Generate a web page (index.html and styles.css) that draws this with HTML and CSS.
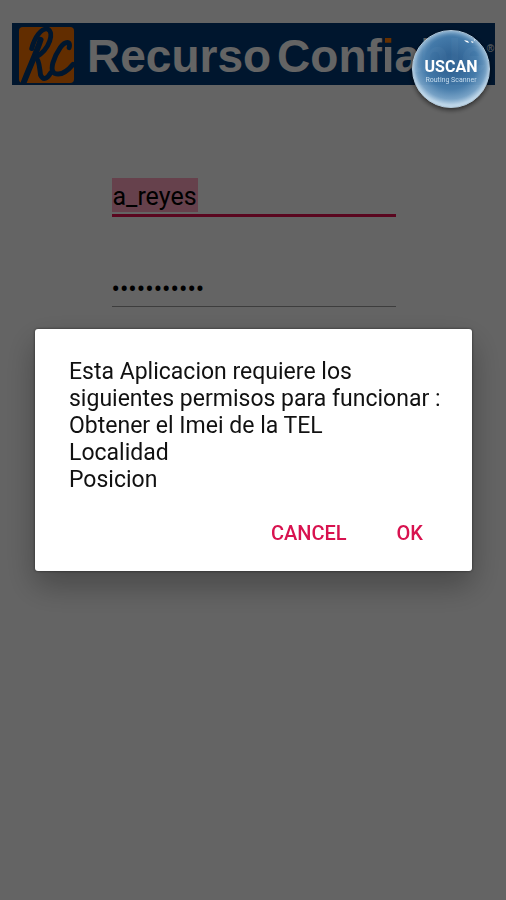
FILE: index.html
```html
<!DOCTYPE html>
<html lang="es">
<head>
<meta charset="utf-8">
<meta name="viewport" content="width=device-width, initial-scale=1">
<title>Recurso Confiable</title>
<link rel="stylesheet" href="styles.css">
</head>
<body>
<main class="screen">
  <header class="banner">
    <svg class="logo" viewBox="0 0 60 60" role="img" aria-label="RC">
      <rect x="2" y="2" width="56" height="57" rx="4" fill="#f57200"/>
      <g fill="none" stroke="#003773" stroke-linecap="round" stroke-linejoin="round">
        <path stroke-width="6" d="M24 15C20 28 13 42 7 58"/>
        <path stroke-width="5" d="M15 24C18 12 25 3 31 4C38 7 34 24 19 33C23 35 23 46 24 51C27 57 31 54 34 49"/>
        <path stroke-width="5" d="M53 23C55 16 49 16 44 23C37 33 33 46 38 49C45 52 52 46 57 40"/>
      </g>
    </svg>
    <h1 class="brand"><span>Recurso</span> <span>Conf<span class="accent-i">i</span>able</span></h1>
    <span class="registered">®</span>
  </header>
  <form class="login">
    <label class="field field-active"><input class="user" type="text" value="a_reyes" aria-label="Usuario"></label>
    <label class="field"><input class="password" type="password" value="abcdefghijk" aria-label="Clave"></label>
  </form>
</main>
<div class="scrim">
  <section class="dialog" role="alertdialog" aria-describedby="message">
    <p class="message" id="message">Esta Aplicacion requiere los siguientes permisos para funcionar :<br>Obtener el Imei de la TEL<br>Localidad<br>Posicion</p>
    <div class="actions">
      <button type="button">CANCEL</button>
      <button type="button">OK</button>
    </div>
  </section>
</div>
<aside class="badge">
  <svg class="glint" viewBox="0 0 12 6" aria-hidden="true"><path d="M0 1l4 1 1 2-3-1zM7 2l3 1-2 1zM10 0l1 1-1 1z" fill="#fff"/></svg>
  <strong>USCAN</strong>
  <small>Routing Scanner</small>
</aside>
</body>
</html>
```
FILE: styles.css
```css
* {
  box-sizing: border-box;
}

body {
  margin: 0;
  min-height: 100vh;
  background: #fafafa;
  color: #000;
  font-family: Roboto, "Liberation Sans", sans-serif;
}

.screen {
  padding: 23px 11px 0 12px;
}

.banner {
  display: flex;
  align-items: center;
  height: 62px;
  padding: 0 3px 0 5px;
  background: #003773;
  color: #fafafa;
  font-family: "Liberation Sans", Arial, sans-serif;
  overflow: hidden;
}

.logo {
  flex: none;
  width: 59px;
  height: 59px;
}

.brand {
  display: flex;
  gap: 6px;
  margin: 3px 0 0 11px;
  font-size: 46px;
  line-height: 60px;
  white-space: nowrap;
}

.accent-i {
  background: linear-gradient(#ff7800 16px, #fafafa 16px);
  background-clip: text;
  color: transparent;
}

.registered {
  margin-left: auto;
  padding-bottom: 12px;
  font-size: 10px;
}

.login {
  display: grid;
  gap: 54px;
  width: 284px;
  margin: 93px auto 0;
}

.field {
  display: flex;
  height: 36px;
  border-bottom: 1px solid #999;
}

.field-active {
  height: 39px;
  padding-bottom: 2px;
  border-bottom: 3px solid #e0104e;
}

.field input {
  width: 100%;
  height: 34px;
  padding: 2px 0 0;
  border: 0;
  outline: 0;
  background: transparent;
  color: #000;
  font: 25px Roboto, sans-serif;
}

.field .user {
  width: auto;
  padding: 2px 1px 0;
  field-sizing: content;
  background: #ffa4be;
}

.scrim {
  position: fixed;
  inset: 0;
  display: flex;
  align-items: center;
  padding: 0 34px 0 35px;
  background: rgba(0, 0, 0, 0.6);
}

.dialog {
  width: 100%;
  padding: 29px 24px 15px 34px;
  border-radius: 3px;
  background: #fff;
  box-shadow: 0 0 3px rgba(0, 0, 0, 0.6), 0 14px 32px rgba(0, 0, 0, 0.3);
}

.message {
  margin: 0;
  color: #111;
  font-size: 23px;
  line-height: 27px;
}

.actions {
  display: flex;
  justify-content: flex-end;
  gap: 20px;
  margin: 18px 10px 0 0;
}

.actions button {
  height: 45px;
  padding: 0 15px;
  border: 0;
  background: transparent;
  color: #d8124f;
  font: 500 20px/41px Roboto, sans-serif;
}

.badge {
  position: fixed;
  top: 30px;
  right: 16px;
  display: flex;
  flex-direction: column;
  align-items: center;
  width: 78px;
  height: 78px;
  padding-top: 26px;
  border: 1px solid #b4cbdc;
  border-radius: 50%;
  background: radial-gradient(circle at 50% 42%, #35699bf2 15%, #477fb0f2 45%, #78a5cbf2 62%, #b9d2e6 72%);
  box-shadow: 0 2px 5px rgba(0, 0, 0, 0.6), inset 0 0 5px #c4dcec;
  color: #fff;
}

.badge strong {
  font: 700 16px/20px Roboto, sans-serif;
}

.badge small {
  color: #c5dced;
  font-size: 7px;
  line-height: 7px;
  white-space: nowrap;
}

.glint {
  position: absolute;
  top: 8px;
  right: 13px;
  width: 12px;
  height: 6px;
}
```
